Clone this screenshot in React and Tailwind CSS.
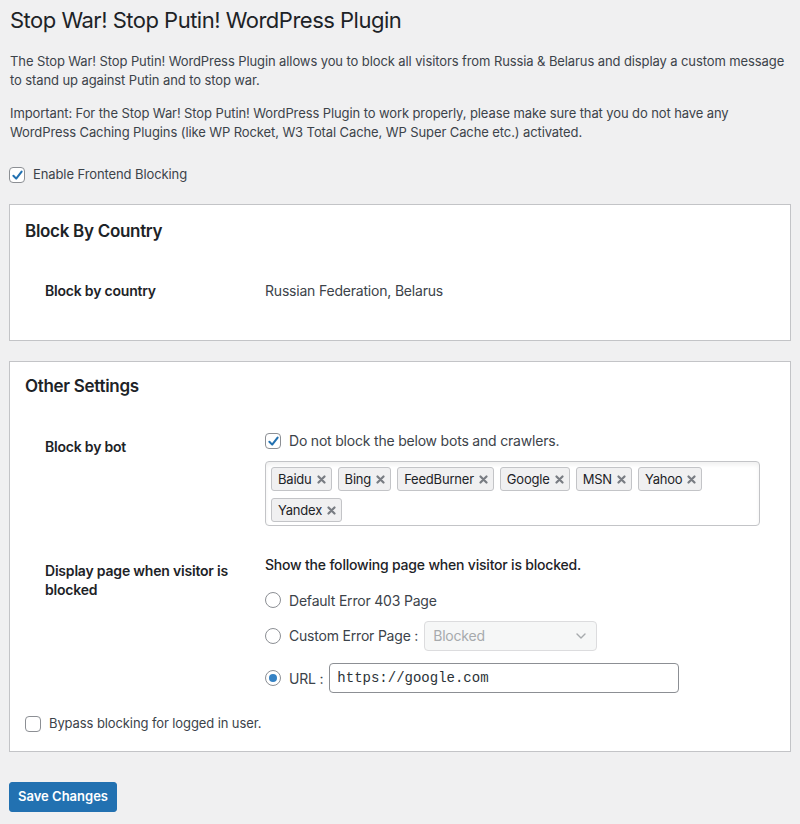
import React from "react";

const font = { fontFamily: "Inter, 'Noto Sans', sans-serif" };

function Check({ checked }) {
  return (
    <span className="inline-flex h-4 w-4 shrink-0 items-center justify-center rounded-[4px] border border-[#8c8f94] bg-white">
      {checked && (
        <svg width="13" height="13" viewBox="0 0 12 12">
          <path d="M2.2 6.3 L4.8 8.9 L9.8 2.4" fill="none" stroke="#2271b1" strokeWidth="1.9" strokeLinecap="round" strokeLinejoin="round" />
        </svg>
      )}
    </span>
  );
}

function Radio({ checked }) {
  return (
    <span className="inline-flex h-4 w-4 shrink-0 items-center justify-center rounded-full border border-[#8c8f94] bg-white">
      {checked && <span className="h-2 w-2 rounded-full bg-[#3582c4]" />}
    </span>
  );
}

function Tag({ label }) {
  return (
    <span className="inline-flex h-6 items-center gap-[5px] rounded-[3px] border border-[#c3c4c7] bg-[#f0f0f1] pl-[6px] pr-[5px] text-[13px] tracking-[-0.2px] text-[#1d2327]">
      {label}
      <svg width="9" height="9" viewBox="0 0 9 9">
        <path d="M1.5 1.5 L7.5 7.5 M7.5 1.5 L1.5 7.5" stroke="#787c82" strokeWidth="2.2" strokeLinecap="round" />
      </svg>
    </span>
  );
}

export default function App() {
  return (
    <div className="min-h-[824px] w-[800px] bg-[#f0f0f1] px-[9px] text-[#3c434a]" style={font}>
      <h1 className="pl-[1px] pt-[6px] text-[22px] font-normal leading-[29px] tracking-[-0.5px] text-[#1d2327]">
        Stop War! Stop Putin! WordPress Plugin
      </h1>
      <p className="mt-[17px] whitespace-nowrap pl-[1px] text-[13px] leading-[19px] tracking-[-0.1px]">
        The Stop War! Stop Putin! WordPress Plugin allows you to block all visitors from Russia &amp; Belarus and display a custom message
        <br />
        to stand up against Putin and to stop war.
      </p>
      <p className="mt-[14px] whitespace-nowrap pl-[1px] text-[13px] leading-[19px] tracking-[-0.1px]">
        Important: For the Stop War! Stop Putin! WordPress Plugin to work properly, please make sure that you do not have any
        <br />
        WordPress Caching Plugins (like WP Rocket, W3 Total Cache, WP Super Cache etc.) activated.
      </p>
      <label className="mt-[23px] flex h-5 items-center gap-2 text-[13px] tracking-[-0.1px]">
        <Check checked />
        <span>Enable Frontend Blocking</span>
      </label>

      <section className="mt-[19px] w-[782px] border border-[#c3c4c7] bg-white px-[15px] pb-[39px] pt-[15px] tracking-[-0.2px]">
        <h2 className="text-[17px] font-semibold leading-[22px] tracking-[-0.3px] text-[#1d2327]">Block By Country</h2>
        <div className="ml-[20px] mt-[39px] grid grid-cols-[220px_1fr] text-[14px] leading-[20px]">
          <div className="font-semibold text-[#1d2327]">Block by country</div>
          <div className="text-[#3c434a]">Russian Federation, Belarus</div>
        </div>
      </section>

      <section className="mt-[20px] w-[782px] border border-[#c3c4c7] bg-white px-[15px] pb-[17px] pt-[13px] tracking-[-0.2px]">
        <h2 className="text-[17px] font-semibold leading-[22px] tracking-[-0.3px] text-[#1d2327]">Other Settings</h2>

        <div className="ml-[20px] mt-[34px] grid grid-cols-[220px_1fr] text-[14px] leading-[20px]">
          <div className="pt-[6px] font-semibold text-[#1d2327]">Block by bot</div>
          <div>
            <label className="flex h-5 items-center gap-2 text-[14px]">
              <Check checked />
              <span>Do not block the below bots and crawlers.</span>
            </label>
            <div className="mt-[10px] flex h-[65px] w-[495px] flex-wrap content-start gap-x-[6px] gap-y-[7px] rounded-[4px] border border-[#c3c4c7] p-[5px] shadow-[inset_0_3px_4px_rgba(0,0,0,0.06)]">
              <Tag label="Baidu" />
              <Tag label="Bing" />
              <Tag label="FeedBurner" />
              <Tag label="Google" />
              <Tag label="MSN" />
              <Tag label="Yahoo" />
              <Tag label="Yandex" />
            </div>
          </div>
        </div>

        <div className="ml-[20px] mt-[29px] grid grid-cols-[220px_1fr] text-[14px]">
          <div className="pr-[10px] pt-[6px] font-semibold leading-[19px] text-[#1d2327]">
            Display page when visitor is blocked
          </div>
          <div>
            <div className="font-medium leading-[20px] text-[#1d2327]">Show the following page when visitor is blocked.</div>
            <label className="mt-[13px] flex h-6 items-center gap-2">
              <Radio />
              <span>Default Error 403 Page</span>
            </label>
            <div className="mt-[8px] flex h-[31px] items-center gap-2">
              <Radio />
              <span>Custom Error Page :</span>
              <div className="-ml-[2px] flex h-[30px] w-[173px] items-center justify-between rounded-[4px] border border-[#dcdcde] bg-[#f6f7f7] pl-[8px] pr-[8px] text-[14px] text-[#a7aaad]">
                <span>Blocked</span>
                <svg width="14" height="14" viewBox="0 0 14 14">
                  <path d="M3 5 L7 9 L11 5" fill="none" stroke="#a7aaad" strokeWidth="1.4" strokeLinecap="round" strokeLinejoin="round" />
                </svg>
              </div>
            </div>
            <div className="mt-[12px] flex h-[30px] items-center gap-2">
              <Radio checked />
              <span>URL :</span>
              <div className="-ml-[2px] flex h-[30px] w-[350px] items-center rounded-[4px] border border-[#8c8f94] bg-white pl-[7px] text-[14px] tracking-normal text-[#2c3338]" style={{ fontFamily: "'Liberation Mono', monospace" }}>
                https://google.com
              </div>
            </div>
          </div>
        </div>

        <label className="mt-[21px] flex h-5 items-center gap-2 text-[13px] tracking-[-0.1px]">
          <Check />
          <span>Bypass blocking for logged in user.</span>
        </label>
      </section>

      <button className="mt-[30px] h-[30px] w-[108px] rounded-[3px] border border-[#2271b1] bg-[#2271b1] text-[13px] font-semibold text-white">
        Save Changes
      </button>
    </div>
  );
}
